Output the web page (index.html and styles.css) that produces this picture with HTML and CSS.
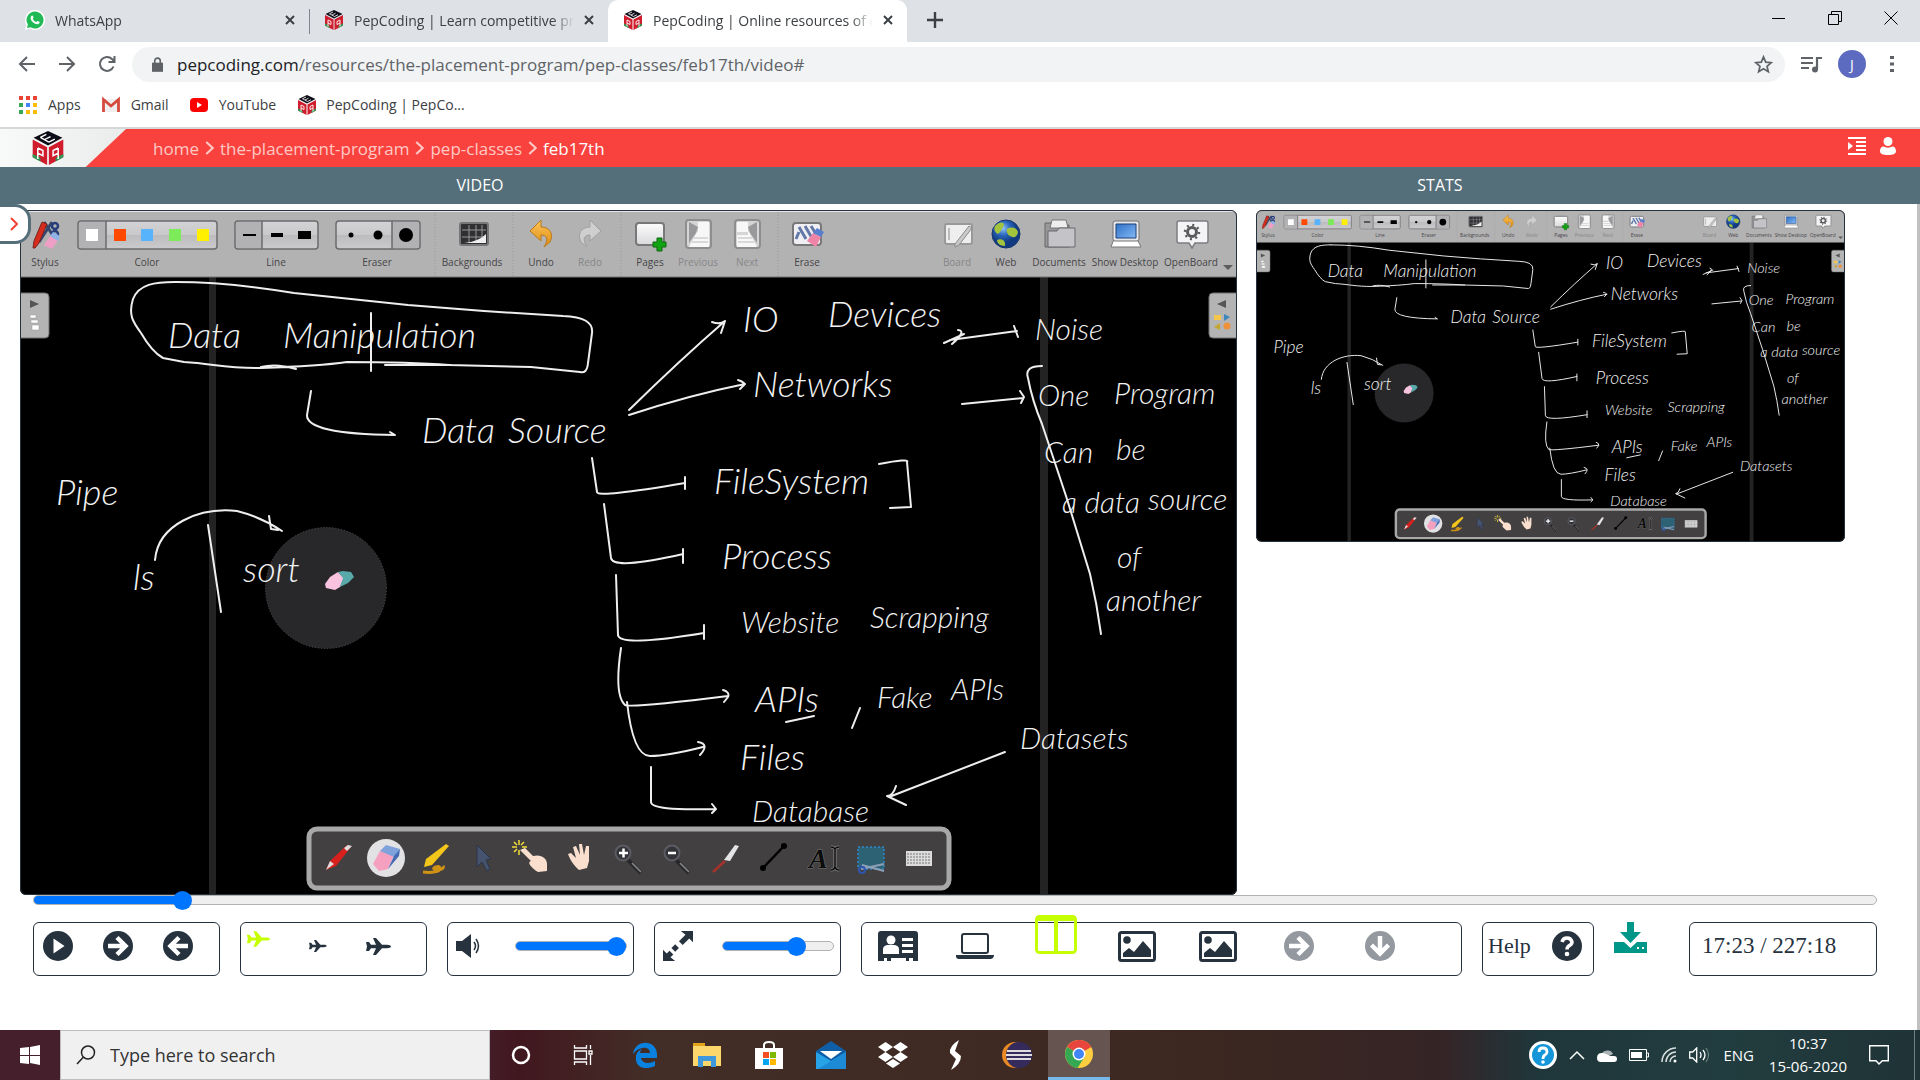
FILE: index.html
```html
<!DOCTYPE html>
<html lang="en">
<head>
<meta charset="utf-8">
<title>PepCoding | Online resources of the placement program</title>
<meta name="viewport" content="width=device-width, initial-scale=1">
<link rel="stylesheet" href="styles.css">
</head>
<body>
<svg class="defs" width="0" height="0" aria-hidden="true">
  <defs>
    <linearGradient id="g-btn" x2="0" y2="1"><stop offset="0" stop-color="#d3d2d4"/><stop offset=".5" stop-color="#c9c8ca"/><stop offset=".5" stop-color="#bcbbbd"/><stop offset="1" stop-color="#cbcacc"/></linearGradient>
    <linearGradient id="g-screen" x2="1" y2="1"><stop offset="0" stop-color="#2f72c8"/><stop offset="1" stop-color="#84b8f4"/></linearGradient>
    <linearGradient id="g-undo" x2="0" y2="1"><stop offset="0" stop-color="#fbc457"/><stop offset="1" stop-color="#e08c12"/></linearGradient>
    <linearGradient id="g-card" x2="0" y2="1"><stop offset="0" stop-color="#fdfdfd"/><stop offset="1" stop-color="#d9d9dc"/></linearGradient>
    <radialGradient id="g-globe" cx=".4" cy=".3"><stop offset="0" stop-color="#8ec6f5"/><stop offset=".5" stop-color="#2a66bd"/><stop offset="1" stop-color="#123a80"/></radialGradient>
  </defs>
  <symbol id="pep" viewBox="0 0 40 40">
    <path d="M20 0 37 8 20 17 3 8Z" fill="#0d0d17"/>
    <path d="M2 10 19 19V40L2 31Z" fill="#d01d2d"/><path d="M38 10 21 19V40l17-9Z" fill="#d01d2d"/>
    <path d="M2 27l9 4.500V36l-9-5ZM38 27l-9 4.500V36l9-5Z" fill="#2b9a56"/>
    <path d="M11 7.500 21 13M11 7.500l7-3.500M16 10l7-3.500M21 13l7-3.500" stroke="#fff" stroke-width="1.600" fill="none"/>
    <path d="M8 20v13M8 20l6 3v6l-6-3M32 20v13M32 20l-6 3v6l6-3" stroke="#fff" stroke-width="1.800" fill="none"/>
  </symbol>
  <symbol id="plane" viewBox="0 0 26 17"><path d="M26 8.500c0 1-2 1.700-4 1.700h-5L11 17H8l3-6.800H6L4 13H1l1-4.500L1 4h3l2 2.800h5L8 0h3l6 6.800h5c2 0 4 .7 4 1.700Z" fill="currentColor"/></symbol>
  <symbol id="go" viewBox="0 0 30 30"><circle cx="15" cy="15" r="15" fill="currentColor"/><path d="M5 15h17M14 6.500l8.500 8.500-8.500 8.500" fill="none" stroke="#fff" stroke-width="4.500"/></symbol>
  <symbol id="picture" viewBox="0 0 38 31"><rect x="1.500" y="1.500" width="35" height="28" rx="2" fill="none" stroke="currentColor" stroke-width="3"/><circle cx="9" cy="9" r="3.800" fill="currentColor"/><path d="M5 26v-4l6-5 5 4 9-11 8 9v7Z" fill="currentColor"/></symbol>
</svg>

<header class="browser">
  <div class="tabstrip">
    <div class="tab">
      <svg class="fav" viewBox="0 0 20 20"><path d="M10 0a10 10 0 1 1-5 18.600L0 20l1.400-5A10 10 0 0 1 10 0Z" fill="#fff"/><path d="M10 1.500a8.500 8.500 0 1 1-4.500 15.700L2 18l.9-3.400A8.500 8.500 0 0 1 10 1.500Z" fill="#20b955"/><path d="M6 6.500c1-2 2-1 2.500.8.2.7-.8 1.200-.6 1.600.7 1.500 1.800 2.500 3.300 3 .6 0 1-1.200 1.500-1 2 .9 2.500 1.100 1.600 2.400-1.600 2-5.300.2-6.600-1.200C6 10.500 5 8.500 6 6.500Z" fill="#fff"/></svg>
      <span class="tab-title">WhatsApp</span>
      <button class="tab-close" aria-label="Close tab"><svg viewBox="0 0 10 10"><path d="M1 1l8 8M9 1l-8 8"/></svg></button>
    </div>
    <div class="tab tab-divided">
      <svg class="fav"><use href="#pep"/></svg>
      <span class="tab-title">PepCoding | Learn competitive pr</span>
      <button class="tab-close" aria-label="Close tab"><svg viewBox="0 0 10 10"><path d="M1 1l8 8M9 1l-8 8"/></svg></button>
    </div>
    <div class="tab tab-active">
      <svg class="fav"><use href="#pep"/></svg>
      <span class="tab-title">PepCoding | Online resources of c</span>
      <button class="tab-close" aria-label="Close tab"><svg viewBox="0 0 10 10"><path d="M1 1l8 8M9 1l-8 8"/></svg></button>
    </div>
    <button class="new-tab" aria-label="New tab"><svg viewBox="0 0 16 16" width="16" height="16"><path d="M8 0v16M0 8h16" stroke="#3c4043" stroke-width="2.400"/></svg></button>
    <div class="window-buttons">
      <button aria-label="Minimise"><svg viewBox="0 0 14 14"><path d="M0 7.500h13"/></svg></button>
      <button aria-label="Restore"><svg viewBox="0 0 14 14"><path d="M.5 3.500h10v10h-10zM3.500 3V.5h10v10H11"/></svg></button>
      <button aria-label="Close"><svg viewBox="0 0 14 14"><path d="M.5.5l13 13M13.500.5l-13 13"/></svg></button>
    </div>
  </div>
  <div class="toolbar">
    <div class="nav-buttons">
      <button aria-label="Back"><svg viewBox="0 0 18 18"><path d="M17 9H2M9 2L2 9l7 7"/></svg></button>
      <button aria-label="Forward"><svg viewBox="0 0 18 18"><path d="M1 9h15M9 2l7 7-7 7"/></svg></button>
      <button aria-label="Reload"><svg viewBox="0 0 18 18"><path d="M15.500 11.500a7 7 0 1 1-1.500-7.500l2 2M16.500 1v6h-6"/></svg></button>
    </div>
    <div class="omnibox">
      <svg class="lock" viewBox="0 0 12 16"><path d="M0 6h12v10H0z" fill="#5f6368"/><path d="M3 7V4a3 3 0 0 1 6 0v3" fill="none" stroke="#5f6368" stroke-width="1.800"/></svg>
      <span class="url"><b>pepcoding.com</b>/resources/the-placement-program/pep-classes/feb17th/video#</span>
      <button class="star" aria-label="Bookmark"><svg viewBox="0 0 20 20" width="19" height="19"><path d="M10 2l2.300 5.500 5.900.5-4.500 3.900 1.400 5.800L10 14.600l-5.100 3.100 1.400-5.800L1.800 8l5.900-.5Z" fill="none" stroke="#5f6368" stroke-width="1.800"/></svg></button>
    </div>
    <button class="bare" aria-label="Media"><svg viewBox="0 0 21 17" width="21" height="17"><path d="M0 2h12M0 7h12M0 12h8M16 13V2h5" fill="none" stroke="#5f6368" stroke-width="2.200"/><circle cx="14" cy="13.500" r="3" fill="#5f6368"/></svg></button>
    <button class="avatar" aria-label="Profile">J</button>
    <button class="bare" aria-label="Menu"><svg viewBox="0 0 4 18" width="4" height="18"><path d="M0 1h4v3H0zM0 7.500h4v3H0zM0 14h4v3H0z" fill="#5f6368"/></svg></button>
  </div>
  <nav class="bookmarks" aria-label="Bookmarks">
    <a href="#"><svg viewBox="0 0 18 18"><path d="M0 0h4v4H0zM7 0h4v4H7zM14 0h4v4h-4z" fill="#ea4335"/><path d="M0 7h4v4H0z" fill="#34a853"/><path d="M7 7h4v4H7z" fill="#4285f4"/><path d="M14 7h4v4h-4zM7 14h4v4H7zM14 14h4v4h-4z" fill="#fbbc05"/><path d="M0 14h4v4H0z" fill="#34a853"/></svg>Apps</a>
    <a href="#"><svg viewBox="0 0 18 18"><path d="M1 3h16v13H1z" fill="#eee"/><path d="M1.500 16V3.500L9 10l7.500-6.500V16" fill="none" stroke="#d64a3d" stroke-width="2.800"/></svg>Gmail</a>
    <a href="#"><svg viewBox="0 0 18 18"><rect y="2" width="18" height="14" rx="4" fill="#f00"/><path d="M7 6l5 3-5 3z" fill="#fff"/></svg>YouTube</a>
    <a href="#"><svg class="wide"><use href="#pep"/></svg>PepCoding | PepCo...</a>
  </nav>
</header>

<div class="site-header">
  <a class="brand" href="#" aria-label="PepCoding home"><svg width="38" height="34"><use href="#pep"/></svg></a>
  <nav class="crumbs" aria-label="Breadcrumb">
    <a href="#">home</a><svg viewBox="0 0 8 13"><path d="M1 1l6 5.500L1 12"/></svg>
    <a href="#">the-placement-program</a><svg viewBox="0 0 8 13"><path d="M1 1l6 5.500L1 12"/></svg>
    <a href="#">pep-classes</a><svg viewBox="0 0 8 13"><path d="M1 1l6 5.500L1 12"/></svg>
    <a class="current" href="#">feb17th</a>
  </nav>
  <div class="site-actions">
    <button class="bare" aria-label="Contents"><svg viewBox="0 0 18 18" width="18" height="18"><path d="M0 1h18M8 5h10M8 9h10M8 13h10M0 17h18" stroke="#fff" stroke-width="2"/><path d="M0 5l5 4-5 4z" fill="#fff"/></svg></button>
    <button class="bare" aria-label="Account"><svg viewBox="0 0 16 18" width="16" height="18"><circle cx="8" cy="4.500" r="4.500" fill="#fff"/><path d="M0 14c0-4 3-5 4-4.500 2 1.500 6 1.500 8 0 1-.5 4 .5 4 4.500 0 3-3 4-8 4s-8-1-8-4Z" fill="#fff"/></svg></button>
  </div>
</div>

<nav class="page-tabs" aria-label="Sections"><a href="#">VIDEO</a><a href="#">STATS</a></nav>

<div class="page">
  <button class="drawer" aria-label="Open drawer"><svg viewBox="0 0 8 14" width="8" height="14"><path d="M1 1l6 6-6 6" fill="none" stroke="#f44336" stroke-width="2"/></svg></button>
  <main>
    <div class="stage">
      <svg class="frame" id="lecture" viewBox="20 210 1217 685" role="img" aria-label="Lecture whiteboard">
        <rect x="20" y="210" width="1217" height="685" fill="#000"/>
        <path d="M209 277h7v618h-7zM1040 277h8v618h-8z" fill="#232324"/>
        <g class="bar">
          <rect x="20" y="212" width="1217" height="65" fill="#b3b2b3"/>
          <path d="M20 211h1217" stroke="#e6e4e8" stroke-width="2"/>
          <path d="M20 277h1217" stroke="#737373"/>
          <path d="M435 212v64M513 212v64M621 212v64M778 212v64" stroke="#969696" stroke-dasharray="1 2"/>
          <path d="M52 222l-13 20" stroke="#35466f" stroke-width="3"/><path d="M44 222l8 12" stroke="#35466f" stroke-width="3"/><circle cx="55" cy="226" r="3" fill="none" stroke="#283e7c" stroke-width="2.500"/><circle cx="55" cy="234" r="3" fill="none" stroke="#283e7c" stroke-width="2.500"/><path d="M33 248l1-7 8-19 5 2-8 19-4 5z" fill="#d62c1e" stroke="#7b231d"/><path d="M44 245l6-9 8 4-6 9z" fill="#ef9fc5"/><path d="M50 236l3-4 7 4-2 5z" fill="#90b3e6"/>
          <g stroke="#6c6a6d" stroke-width="1.500"><rect x="78" y="221" width="139" height="28" rx="3" fill="url(#g-btn)"/><rect x="235" y="221" width="83" height="28" rx="3" fill="url(#g-btn)"/><rect x="336" y="221" width="84" height="28" rx="3" fill="url(#g-btn)"/><path d="M79 222h27v26H79zM236 222h26v26h-26zM392 222h27v26h-27z" fill="#b2b1b3" stroke="none"/><path d="M106 221v28M262 221v28M392 221v28"/></g>
          <path d="M86 229h12v12H86z" fill="#fff"/><path d="M114 229h12v12h-12z" fill="#ff4800"/><path d="M141 229h12v12h-12z" fill="#57b3fb"/><path d="M169 229h12v12h-12z" fill="#7cea59"/><path d="M197 229h12v12h-12z" fill="#fff000"/>
          <path d="M243 234h13v2h-13zM271 233h12v4h-12zM298 231h13v8h-13z"/><circle cx="351" cy="235" r="2.500"/><circle cx="378" cy="235" r="4.500"/><circle cx="406" cy="235" r="7"/>
          <rect x="460" y="223" width="28" height="22" rx="2" fill="#303033" stroke="#77777a" stroke-width="2"/><path d="M462 230h24M462 237h24M469 225v18M476 225v18M482 225v18" stroke="#96969a"/><path d="M464 243c10-1 17-4 22-9v9z" fill="#eee"/>
          <path d="M541 220v7c9 0 13 7 9 15l-6 5c5-8 3-12-3-12v6l-11-10z" fill="url(#g-undo)" stroke="#b9791c"/><path d="M590 220v7c-9 0-13 7-9 15l6 5c-5-8-3-12 3-12v6l11-10z" fill="#cfcfcf" stroke="#a0a0a0"/>
          <rect x="636" y="223" width="28" height="22" rx="3" fill="url(#g-card)" stroke="#78787a" stroke-width="2"/><path d="M657 238h5v4h4v5h-4v4h-5v-4h-4v-5h4z" fill="#12a312" stroke="#0a6a0c"/>
          <rect x="686" y="220" width="25" height="28" rx="3" fill="#d5d5d5" stroke="#8e8e90" stroke-width="2"/><path d="M698 222h11v13h-11zM689 247l8-15h12v15z" fill="#f7f7f7"/><path d="M689 222l9 5-2 6-7 10z" fill="#99999b"/><path d="M694 238h14M692 242h16" stroke="#bbb"/>
          <rect x="735" y="220" width="25" height="28" rx="3" fill="#d5d5d5" stroke="#8e8e90" stroke-width="2"/><path d="M737 222h11v13h-11zM757 247l-8-15h-12v15z" fill="#f7f7f7"/><path d="M757 222l-9 5 2 6 7 10z" fill="#99999b"/><path d="M738 238h14M738 242h16" stroke="#bbb"/>
          <rect x="793" y="223" width="28" height="22" rx="3" fill="#f0f0f4" stroke="#78787a" stroke-width="2"/><path d="M796 239l3-7M799 227l7 12M805 226l7 12M811 226l5 8" stroke="#6278a6" stroke-width="3" fill="none"/><path d="M807 241l6-8 8 4-5 10z" fill="#ee84a6"/><path d="M813 233l4-5 7 4-3 5z" fill="#5a7fcf"/>
          <rect x="945" y="224" width="27" height="20" rx="2" fill="#eee" stroke="#999" stroke-width="2"/><path d="M949 228v12M955 244l14-18 3 2-13 17-4 2z" fill="#c9c9c9" stroke="#8b8b8b"/>
          <circle cx="1006" cy="234" r="14" fill="url(#g-globe)" stroke="#17376e"/><path d="M995 226c5-5 9-4 9-1-2 3-3 7-6 9-2-1-5-4-3-8ZM1007 229c5-3 10-1 11 3-1 6-5 6-8 4-2-1-4-4-3-7ZM997 240c5-2 9 1 8 6-5 0-8-3-8-6Z" fill="#a4c33c"/>
          <path d="M1045 223h9l2 2h13v22h-24z" fill="#98989b" stroke="#666"/><path d="M1052 220h14l2 8h-18z" fill="#eee" stroke="#777"/><path d="M1048 231h9l2-3h16v19h-27z" fill="#c3c3c8" stroke="#68686c"/>
          <path d="M1111 247l3-8h23l4 8z" fill="#fff" stroke="#777"/><rect x="1113" y="221" width="26" height="20" rx="2" fill="#e7e7e9" stroke="#707074"/><path d="M1116 224h20v14h-20z" fill="url(#g-screen)" stroke="#1d3e78"/>
          <path d="M1179 221h27q2 0 2 2v18q0 2-2 2h-11l-3 5-3-5h-10q-2 0-2-2v-18q0-2 2-2z" fill="#f4f4f6" stroke="#7d7d80" stroke-width="1.500"/><circle cx="1192" cy="232" r="4.500" fill="none" stroke="#5b5b5e" stroke-width="3"/><circle cx="1192" cy="232" r="7" fill="none" stroke="#5b5b5e" stroke-width="2.500" stroke-dasharray="2 3.500"/>
          <path d="M1223 265h10l-5 5z" fill="#5d5d5f"/>
          <g class="bar-labels"><text x="45" y="266">Stylus</text><text x="147" y="266">Color</text><text x="276" y="266">Line</text><text x="377" y="266">Eraser</text><text x="472" y="266">Backgrounds</text><text x="541" y="266">Undo</text><text class="off" x="590" y="266">Redo</text><text x="650" y="266">Pages</text><text class="off" x="698" y="266">Previous</text><text class="off" x="747" y="266">Next</text><text x="807" y="266">Erase</text><text class="off" x="957" y="266">Board</text><text x="1006" y="266">Web</text><text x="1059" y="266">Documents</text><text x="1125" y="266">Show Desktop</text><text x="1191" y="266">OpenBoard</text></g>
        </g>
        <path d="M20 293h25q4 0 4 4v37q0 4-4 4H20z" fill="#b5b4b5" stroke="#707070"/><path d="M30 300l9 4-9 4z" fill="#555"/><path d="M30 315h6v3h-6zM31 320h7v3h-7zM32 325h7v5h-7z" fill="#fff" stroke="#999" stroke-width=".5"/>
        <path d="M1237 293h-24q-4 0-4 4v37q0 4 4 4h24z" fill="#b5b4b5" stroke="#707070"/><path d="M1226 300l-9 4 9 4z" fill="#555"/><path d="M1214 315h7v5h-7z" fill="#f4c74a"/><path d="M1224 314l6 3-6 4z" fill="#3d87bb"/><path d="M1220 323v7l-6-3z" fill="#c3a730"/><circle cx="1227" cy="326" r="3.500" fill="#ef9138"/>
        <circle cx="326" cy="588" r="60.500" fill="#28282a" stroke="#555" stroke-dasharray="1 2"/>
        <path d="M325 584l5-7 8-5 6 6-4 9-5 3-9-2z" fill="#f9c3df"/><path d="M338 572l5-1 8 1 3 5-6 6-8 4 3-9z" fill="#58a9aa"/>
        <g class="ink">
          <path d="M175 282C155 282 139 284 133 299C128 315 133 322 141 333Q152 352 163 358L184 362C215 364 225 368 261 368Q320 366 347 362Q410 362 449 365L531 367L580 372Q587 374 588 363L592 333Q594 317 563 316L484 311L408 305L294 293Q229 282 175 282M261 367q15-4 35 2M371 313v58M385 365h66"/>
          <path d="M311 391L307 415Q306 434 395 435l-5-3"/>
          <path d="M155 560C158 524 200 507 237 511Q261 517 282 531M269 516l2 13 7 1M208 525l13 87"/>
          <path d="M629 410Q680 360 725 321M712 322q8 3 13-1l-4 12M629 415Q690 395 745 384M738 380q4 1 7 4l-5 5"/>
          <path d="M944 343l20-9M958 330q9 1-6 14M950 340l67-9M1014 326l4 11M962 404l61-6M1020 391l4 6-3 6"/>
          <path d="M1042 366Q1024 366 1028 378Q1032 400 1042 424L1067 499L1090 574Q1097 604 1101 634"/>
          <path d="M592 458l5 34q0 6 88-9M685 477v12M604 504l7 54q2 12 72-4M683 549v14M616 575l2 60q2 12 86-2M704 625v14M621 648Q614 695 625 705q7 3 103-9M723 690q7 2 5 7l-4 5M627 702Q633 756 650 756t53-9M698 742q12 2 2 13M651 767v35q0 9 64 7M712 804l4 5-4 4"/>
          <path d="M879 464q31-6 28-2l4 45-21 1M786 722l28-6M1005 752L889 797M896 786q-3 10-9 10l19 9M860 708l-8 20"/>
        </g>
        <g class="words">
          <text class="xl" x="168" y="348">Data</text><text class="xl" x="283" y="348">Manipulation</text>
          <text class="xl" x="422" y="443">Data</text><text class="xl" x="508" y="443">Source</text>
          <text class="xl" x="56" y="505">Pipe</text><text class="xl" x="133" y="590">ls</text><text class="xl" x="243" y="582">sort</text>
          <text class="xl" x="743" y="332">IO</text><text class="xl" x="828" y="327">Devices</text><text x="1035" y="340">Noise</text>
          <text class="xl" x="753" y="397">Networks</text><text x="1038" y="406">One</text><text x="1114" y="404">Program</text>
          <text x="1044" y="463">Can</text><text x="1116" y="460">be</text><text x="1062" y="513">a data</text><text x="1148" y="510">source</text><text x="1117" y="568">of</text><text x="1106" y="611">another</text>
          <text class="xl" x="714" y="494">FileSystem</text><text class="xl" x="722" y="569">Process</text><text x="741" y="633">Website</text><text x="870" y="628">Scrapping</text>
          <text class="xl" x="755" y="712">APIs</text><text x="877" y="708">Fake</text><text x="951" y="700">APIs</text><text class="xl" x="740" y="770">Files</text><text x="752" y="822">Database</text><text x="1020" y="749">Datasets</text>
        </g>
        <g class="palette">
          <rect x="309" y="829" width="640" height="59" rx="8" fill="#424041" stroke="#a9a8a9" stroke-width="5"/>
          <path d="M326 870l4-9 17-16 4 2-15 19z" fill="#d8201c"/><path d="M326 870l4-9 4 3zM344 848l4-3 4 1-5 5z" fill="#ddd"/>
          <circle cx="386" cy="858" r="19" fill="#e2e1e4"/><path d="M373 864l7-13 14 4-6 14-9 2z" fill="#f6a0c0"/><path d="M380 851l6-6 14 4-6 8z" fill="#7fa2dc"/><path d="M388 869l6-13 6-7-1 7z" fill="#466bb5"/>
          <path d="M424 867l2-8 20-15 3 2-17 19z" fill="#f4c61a"/><path d="M423 872c8 1 18 0 17-4-1-3-8 0-6 1 6 2 11-1 9-3" fill="none" stroke="#cf9215" stroke-width="3"/>
          <path d="M477 845v22l5-5 5 9 3-2-4-9 5-1z" fill="#46536f" stroke="#2c3548"/>
          <path d="M520 850l5-2 8 8c8-2 14 2 14 8v7l-9 1c-8-5-11-10-7-11z" fill="#fadfce"/><path d="M519 840v5M519 850v5M512 847h5M522 847h5M514 842l3 3M524 842l-3 3M514 852l3-3" stroke="#f1dc3c" stroke-width="1.500"/>
          <path d="M568 854l3-1 5 5-3-11 3-1 4 9-1-11h3l2 11 2-9h3v15l-2 7-8 2c-6-5-9-11-11-16z" fill="#fadfce"/>
          <path d="M628 860l13 13M676 860l13 13" stroke="#28282c" stroke-width="4"/><path d="M632 863l9 9M680 863l9 9" stroke="#888" stroke-width="1.500"/><circle cx="623" cy="853" r="7.500" fill="#33333a" stroke="#5c5b63" stroke-width="2"/><circle cx="672" cy="853" r="7.500" fill="#33333a" stroke="#5c5b63" stroke-width="2"/><path d="M619 853h9M623.500 848.500v9M668 853h8" stroke="#fff" stroke-width="2.500"/>
          <path d="M724 860l11-15 4 1-9 15z" fill="#e5e5e8"/><path d="M713 872l12-11" stroke="#a8322b" stroke-width="2.500"/>
          <path d="M763 868l21-22" stroke="#000" stroke-width="2.500"/><circle cx="763" cy="868" r="3"/><circle cx="784" cy="846" r="3"/>
          <text class="text-tool" x="809" y="868">A</text><path d="M831 847q3 0 4 2q1-2 4-2M835 849v18M831 870q3 0 4-3q1 3 4 3" fill="none" stroke="#8a8a8a" stroke-width="3"/><path d="M831 847q3 0 4 2q1-2 4-2M835 849v18M831 870q3 0 4-3q1 3 4 3" fill="none" stroke="#0c0c0c" stroke-width="1.500"/>
          <path d="M858 847h26v22h-26z" fill="#2c6273" stroke="#2f86cb" stroke-width="1.500" stroke-dasharray="2 2"/><path d="M861 869l23-5M862 865l22 6" stroke="#8ea0b8" stroke-width="2"/><circle cx="862" cy="870" r="3" fill="none" stroke="#2f56ae" stroke-width="2"/>
          <rect x="906" y="851" width="26" height="15" fill="#dcdcdc"/><path d="M907 854h24M907 857h24M907 860h24M907 863h24" stroke="#777" stroke-dasharray="2 1"/>
        </g>
      </svg>
      <svg class="frame" id="preview" viewBox="20 210 1217 685" role="img" aria-label="Screen share"></svg>
    </div>

    <div class="player">
      <input class="slider seek" type="range" min="0" max="1000" value="76" style="--fill:8%" aria-label="Seek">
      <div class="controls">
        <div class="box transport">
          <button aria-label="Play"><svg viewBox="0 0 30 30" width="30" height="30"><circle cx="15" cy="15" r="15" fill="currentColor"/><path d="M10.500 7.500l11 7.500-11 7.500z" fill="#fff"/></svg></button>
          <button aria-label="Forward"><svg width="30" height="30"><use href="#go"/></svg></button>
          <button aria-label="Back"><svg class="turn-left" width="30" height="30"><use href="#go"/></svg></button>
        </div>
        <div class="box speeds">
          <button class="selected" aria-label="Normal speed"><svg width="24" height="16"><use href="#plane"/></svg></button>
          <button aria-label="Fast"><svg width="19" height="12"><use href="#plane"/></svg></button>
          <button aria-label="Faster"><svg width="26" height="17"><use href="#plane"/></svg></button>
        </div>
        <div class="box level">
          <button aria-label="Mute"><svg viewBox="0 0 24 24" width="24" height="24"><path d="M0 7h6l9-7v24l-9-7H0z" fill="currentColor"/><path d="M18 8q3 4 0 8M20 5q5 7 0 14" fill="none" stroke="currentColor" stroke-width="1.500"/></svg></button>
          <input class="slider" type="range" min="0" max="100" value="100" style="--fill:100%" aria-label="Volume">
        </div>
        <div class="box level">
          <button aria-label="Resize"><svg viewBox="0 0 32 32" width="30" height="30"><path d="M19 0h13v12l-4-4-7 7-4-4 7-7zM13 32H0V20l4 4 3-3 4 4-3 3zM9 18l4-4 4 4-4 4z" fill="currentColor"/></svg></button>
          <input class="slider" type="range" min="0" max="100" value="70" style="--fill:70%" aria-label="Zoom">
        </div>
        <div class="box views">
          <button aria-label="Notes"><svg viewBox="0 0 40 31" width="40" height="31"><path d="M3 0h34q3 0 3 3v27h-5v-3h-4v3h-3v-3H13v3h-4v-3H6v3H0V3q0-3 3-3Z" fill="currentColor"/><circle cx="13" cy="9" r="4.500" fill="#fff"/><path d="M5 23v-5q0-3 4-4h8q4 1 4 4v5zM24 7h11v3H24zM24 13h11v3H24zM24 19h11v3H24z" fill="#fff"/></svg></button>
          <button aria-label="Laptop"><svg viewBox="0 0 38 26" width="38" height="26"><rect x="6" y="1" width="26" height="19" rx="2" fill="none" stroke="currentColor" stroke-width="2"/><path d="M0 22h38v1q-1 3-3 3H3q-3 0-3-3z" fill="currentColor"/></svg></button>
          <button class="selected" aria-label="Side by side"><svg viewBox="0 0 42 39" width="42" height="39"><rect x="1.500" y="1.500" width="39" height="36" rx="3" fill="none" stroke="currentColor" stroke-width="3"/><path d="M1 1h40v5H1zM19 5h4v32h-4z" fill="currentColor"/></svg></button>
          <button aria-label="First picture"><svg width="38" height="31"><use href="#picture"/></svg></button>
          <button aria-label="Second picture"><svg width="38" height="31"><use href="#picture"/></svg></button>
          <button aria-label="Move right" disabled><svg width="30" height="30"><use href="#go"/></svg></button>
          <button aria-label="Move down" disabled><svg class="turn-down" width="30" height="30"><use href="#go"/></svg></button>
        </div>
        <button class="box help">Help <svg viewBox="0 0 30 30" width="30" height="30"><circle cx="15" cy="15" r="15" fill="currentColor"/><path d="M10 11q1-4 5-4t5 4q0 2-2.500 3.500T15 18.500" fill="none" stroke="#fff" stroke-width="3.500"/><circle cx="15" cy="23" r="2.300" fill="#fff"/></svg></button>
        <button class="download" aria-label="Download"><svg viewBox="0 0 33 31" width="33" height="31"><path d="M13 0h7v10h7L16.500 21 6 10h7zM0 20h10l6.500 6 6.500-6h10v11H0z" fill="#009688"/><path d="M23 25h2v2h-2zM28 25h2v2h-2z" fill="#fff"/></svg></button>
        <div class="box time">17:23 / 227:18</div>
      </div>
    </div>
  </main>
  <div class="scroll-track"></div>
</div>

<footer class="taskbar">
  <button class="start" aria-label="Start"><svg viewBox="0 0 20 20" width="20" height="20"><path d="M0 3l9-1v8H0zM10 2l10-2v10H10zM0 11h9v8l-9-1zM10 11h10v9l-10-2z" fill="#fff"/></svg></button>
  <label class="search"><svg viewBox="0 0 20 20" width="20" height="20"><circle cx="12" cy="7.500" r="6.500"/><path d="M7.500 12L1 19"/></svg><input type="text" placeholder="Type here to search" aria-label="Type here to search"></label>
  <div class="apps">
    <button aria-label="Cortana"><svg viewBox="0 0 20 20" width="20" height="20"><circle cx="10" cy="10" r="8" fill="none" stroke="#fff" stroke-width="2.500"/></svg></button>
    <button aria-label="Task view"><svg viewBox="0 0 20 20" width="20" height="20"><path d="M1.500 0v3h12V0M1.500 6h12v8h-12zM1.500 20v-3h12v3M17.500 0v4M17.500 10v10M16 6h3v3h-3z" fill="none" stroke="#fff" stroke-width="1.300"/></svg></button>
    <button aria-label="Edge"><svg viewBox="0 0 26 26" width="26" height="26"><path d="M1 12C3-3 24-3 25 12v4H9c1 6 9 6 14 3v5C12 29 3 25 4 15c0-4 3-7 6-8-1 1-2 2-2 4h10C18 4 7 4 1 12Z" fill="#0a80df"/></svg></button>
    <button aria-label="Explorer"><svg viewBox="0 0 28 24" width="28" height="24"><path d="M0 0h12v4H0z" fill="#e2a41b"/><path d="M0 3h28v20H0z" fill="#fcd76b"/><path d="M5 24V13h18v11h-5v-6h-8v6z" fill="#3f98dc"/></svg></button>
    <button aria-label="Store"><svg viewBox="0 0 28 28" width="28" height="28"><path d="M9 8V4q0-3 5-3t5 3v4" fill="none" stroke="#fff" stroke-width="2"/><path d="M0 7h28v21H0z" fill="#fff"/><path d="M8 11h6v6H8z" fill="#f25022"/><path d="M15 11h6v6h-6z" fill="#7fba00"/><path d="M8 18h6v6H8z" fill="#00a4ef"/><path d="M15 18h6v6h-6z" fill="#ffb900"/></svg></button>
    <button aria-label="Mail"><svg viewBox="0 0 30 28" width="30" height="28"><path d="M0 10L15 0l15 10v18H0z" fill="#0f5ea8"/><path d="M4 10h22L15 18z" fill="#fff"/><path d="M0 11l15 9 15-9v17H0z" fill="#27a3e8"/><path d="M2 28L30 11v17z" fill="#1d8ad6"/></svg></button>
    <button aria-label="Dropbox"><svg viewBox="0 0 30 26" width="30" height="26"><path d="M7.500 0L15 5l-7.500 5L0 5zM22.500 0L30 5l-7.500 5L15 5zM7.500 10l7.500 5-7.500 5L0 15zM22.500 10l7.500 5-7.500 5-7.500-5zM15 17l7 4.500-7 4.500-7-4.500z" fill="#fff"/></svg></button>
    <button aria-label="Stylus app"><svg viewBox="0 0 16 30" width="16" height="30"><path d="M12 0Q2 6 3 13l6 6-5 11Q14 24 14 16L8 11z" fill="#fff"/></svg></button>
    <button aria-label="Eclipse"><svg viewBox="0 0 30 28" width="30" height="28"><circle cx="13" cy="14" r="13" fill="#e98a22"/><circle cx="17" cy="14" r="13" fill="#342a5c"/><path d="M5 10h24M4 14h26M5 18h24" stroke="#ddd" stroke-width="2"/></svg></button>
    <button class="running" aria-label="Chrome"><svg viewBox="0 0 28 28" width="28" height="28"><circle cx="14" cy="14" r="14" fill="#ffcd40"/><path d="M14 14L2 7a14 14 0 0 1 24.300 0z" fill="#e8453c"/><path d="M14 14L2 7a14 14 0 0 0 10.500 21l7-11z" fill="#34a853"/><circle cx="14" cy="14" r="6.500" fill="#fff"/><circle cx="14" cy="14" r="5" fill="#4285f4"/></svg></button>
  </div>
  <div class="tray">
    <button aria-label="Assistant"><svg viewBox="0 0 28 28" width="28" height="28"><circle cx="14" cy="14" r="12.500" fill="#1596d8" stroke="#fff" stroke-width="3"/><path d="M10 11q0-4 4-4t4 4q0 2-2 3t-2 4" fill="none" stroke="#fff" stroke-width="2.800"/><circle cx="14" cy="21" r="1.800" fill="#fff"/></svg></button>
    <button aria-label="Hidden icons"><svg viewBox="0 0 16 10" width="16" height="10"><path d="M1 9l7-7 7 7" fill="none" stroke="#fff" stroke-width="1.500"/></svg></button>
    <button aria-label="OneDrive"><svg viewBox="0 0 20 14" width="20" height="14"><path d="M5 5a6 5 0 0 1 11 1l-6 3z" fill="#aab4b5"/><path d="M0 10q0-5 5-5 3 0 8 3h4q3 0 3 3t-3 3H4q-4 0-4-4Z" fill="#fff"/></svg></button>
    <button aria-label="Battery"><svg viewBox="0 0 20 12" width="20" height="12"><path d="M.5.5h17v11H.5zM18 4h1.500v4H18" fill="none" stroke="#fff"/><path d="M2 3h11v6H2z" fill="#fff"/></svg></button>
    <button aria-label="Network"><svg viewBox="0 0 16 16" width="16" height="16"><path d="M1 15A14 14 0 0 1 15 1M5 15A10 10 0 0 1 15 5M9 15a6 6 0 0 1 6-6" fill="none" stroke="#d8dfdf" stroke-width="1.500"/><circle cx="14" cy="14" r="1.500" fill="#fff"/></svg></button>
    <button aria-label="Sound"><svg viewBox="0 0 20 16" width="20" height="16"><path d="M.7 5h3l4-4v14l-4-4h-3zM11 5q2 3 0 6M14 3q4 5 0 10" fill="none" stroke="#fff" stroke-width="1.300"/><path d="M17 1q5 7 0 14" fill="none" stroke="#7d8f90"/></svg></button>
    <button class="lang">ENG</button>
    <button class="clock"><span>10:37</span><span>15-06-2020</span></button>
    <button aria-label="Notifications"><svg viewBox="0 0 20 20" width="20" height="20"><path d="M.7.700h18.600v15h-6L10 19l-3-3.300H.7z" fill="none" stroke="#fff" stroke-width="1.400"/></svg></button>
  </div>
</footer>
<script src="script.js"></script>
</body>
</html>
```
FILE: styles.css
```css
* { box-sizing: border-box; }
body {
  margin: 0;
  min-height: 100vh;
  display: flex;
  flex-direction: column;
  background: #fff;
  color: #26323e;
  font-family: "Open Sans", "Noto Sans", sans-serif;
}
button { padding: 0; border: 0; background: none; color: inherit; font: inherit; }
a { color: inherit; text-decoration: none; }
svg { display: block; flex: none; }
.defs { position: absolute; }

/* browser window */
.browser { font-size: 14px; color: #3c4043; border-bottom: 2px solid #d5d8da; }
.tabstrip { display: flex; height: 42px; padding-left: 10px; background: #dee1e6; }
.tab { display: flex; align-items: center; width: 299px; gap: 10px; padding: 0 14px 2px 15px; }
.tab-divided { background: linear-gradient(#80868b, #80868b) left center / 1px 25px no-repeat; }
.tab-active { background: #fff; border-radius: 10px 10px 0 0; }
.fav { width: 20px; height: 20px; }
.tab-title { flex: 1; overflow: hidden; white-space: nowrap; mask-image: linear-gradient(90deg, #000 90%, transparent); }
.tab-close svg { width: 10px; height: 10px; stroke: #3c4043; stroke-width: 2; }
.new-tab { margin-left: 20px; padding-bottom: 2px; }
.window-buttons { display: flex; gap: 42px; margin-left: auto; padding: 0 22px 6px 0; align-items: center; }
.window-buttons svg { width: 14px; height: 14px; fill: none; stroke: #000; }
.toolbar { display: flex; align-items: center; height: 44px; gap: 16px; padding: 0 26px 0 18px; }
.nav-buttons { display: flex; gap: 22px; }
.nav-buttons svg { width: 18px; height: 18px; fill: none; stroke: #5f6368; stroke-width: 2; }
.omnibox { flex: 1; display: flex; align-items: center; height: 35px; gap: 14px; padding: 0 12px 0 20px; border-radius: 18px; background: #f1f3f4; }
.lock { width: 11px; height: 15px; }
.url { flex: 1; font-size: 17px; color: #5f6368; white-space: nowrap; }
.url b { font-weight: 400; color: #202124; }
.avatar { width: 28px; height: 28px; border-radius: 50%; background: #5c6bc0; color: #fff; }
.toolbar .avatar + .bare { margin-left: 8px; }
.bookmarks { display: flex; align-items: center; height: 41px; padding: 0 0 4px 19px; gap: 21px; }
.bookmarks a { display: flex; align-items: center; gap: 11px; }
.bookmarks svg { width: 18px; height: 18px; }
.bookmarks .wide { width: 20px; height: 20px; margin-right: -2px; }

/* site header */
.site-header { display: flex; align-items: center; height: 38px; background: #f9423e; }
.brand { width: 126px; height: 38px; padding: 2px 0 0 29px; background: linear-gradient(90deg, #f8faf9, #e9eceb); clip-path: polygon(0 0, 100% 0, 68% 100%, 0 100%); }
.crumbs { display: flex; align-items: center; gap: 6px; margin-left: 27px; font-size: 17px; color: #ffc9c5; }
.crumbs svg { width: 9px; height: 14px; fill: none; stroke: #ffc9c5; stroke-width: 2; }
.crumbs .current { color: #fff; }
.site-actions { display: flex; gap: 14px; margin-left: auto; padding: 0 24px 5px 0; }
.page-tabs { display: grid; grid-template-columns: 1fr 1fr; align-items: center; height: 37px; padding-bottom: 1px; background: #546e7a; color: #fff; font-size: 16px; text-align: center; }

/* lecture frames */
.page { position: relative; display: flex; flex: 1; }
.drawer { position: absolute; left: 0; top: 0; width: 31px; height: 40px; padding-left: 10px; border: 3px solid #546e7a; border-left: 0; border-radius: 0 16px 16px 0; background: #fff; z-index: 1; }
main { flex: 1; min-width: 0; }
.scroll-track { width: 3px; background: #c1c1c1; }
.stage { display: grid; grid-template-columns: 1217fr 589fr 53fr; gap: 19px; align-items: start; padding: 6px 0 0 20px; }
.frame { width: 100%; border-radius: 6px; outline: 1px solid #26323e; outline-offset: -1px; }
.bar-labels text { font: 10px "Open Sans", sans-serif; fill: #454547; text-anchor: middle; }
.bar-labels .off { fill: #868688; }
.ink { fill: none; stroke: #eee; stroke-width: 2; stroke-linejoin: round; stroke-linecap: round; }
.words text { font: italic 300 30px Lato, sans-serif; fill: #f2f2f2; }
.words .xl { font-size: 36px; }
.palette .text-tool { font: italic bold 28px "Liberation Serif", serif; fill: #0c0c0c; stroke: #777; stroke-width: 1px; paint-order: stroke; }

/* player */
.player { padding: 0 40px 0 33px; }
.slider { appearance: none; flex: 1; display: block; min-width: 0; width: 100%; height: 10px; margin: 0; border: 1px solid #b2b2b2; border-radius: 5px; background: linear-gradient(#0075ff, #0075ff) left / var(--fill) 100% no-repeat #efefef; }
.slider::-webkit-slider-thumb { appearance: none; width: 19px; height: 19px; border-radius: 50%; background: #0075ff; }
.controls { display: grid; grid-template-columns: repeat(4, minmax(0, 187fr)) minmax(0, 601fr) minmax(0, 112fr) minmax(0, 55fr) minmax(0, 188fr); gap: 20px; margin-top: 17px; }
.box { display: flex; align-items: center; height: 54px; padding-bottom: 6px; border: 1px solid #26323e; border-radius: 6px; }
.transport { gap: 30px; padding-left: 9px; }
.speeds { gap: 38px; padding-left: 5px; }
.selected { color: #c6ff00; align-self: flex-start; }
.speeds .selected { margin-top: 8px; }
.level { gap: 35px; padding: 0 6px 6px 8px; }
.level + .level { gap: 29px; }
.views button { display: grid; justify-items: center; flex: 0 1 81px; }
.views button:first-child { flex-basis: 72px; }
.views .selected { margin-top: -8px; }
.views button:disabled { color: #9499a0; }
.turn-left { transform: rotate(180deg); }
.turn-down { transform: rotate(90deg); }
.help { justify-content: space-between; padding: 0 11px 6px 5px; font: 22px "Liberation Serif", serif; }
.download { align-self: start; }
.time { padding-left: 12px; font: 23px "Liberation Serif", serif; }

/* taskbar */
.taskbar { display: flex; height: 50px; background: linear-gradient(90deg, #451f2b 0, #451f2b 25%, #41171f 27%, #432e27 34%, #3c2820 62%, #352426 75%, #1f363b 80%, #223d3f 90%, #1f3337); color: #fff; }
.start { display: grid; place-items: center; width: 60px; }
.search { display: flex; align-items: center; gap: 12px; width: 430px; padding-left: 15px; border: 1px solid #bdbdbd; background: #f0f0f0; }
.search svg { fill: none; stroke: #222; stroke-width: 1.5; }
.search input { flex: 1; border: 0; background: none; font: 18px "Open Sans", sans-serif; }
.search input::placeholder { color: #333; }
.apps { display: flex; }
.apps button { display: grid; place-items: center; width: 62px; }
.apps .running { background: #665450; border-bottom: 3px solid #76b9ed; }
.tray { display: flex; align-items: center; gap: 12px; margin-left: auto; margin-right: 5px; padding-right: 25px; border-right: 1px solid #6f8384; font-size: 15px; }
.lang { padding-left: 2px; }
.clock { display: flex; flex-direction: column; align-items: center; width: 84px; line-height: 23px; margin-right: 7px; }
```
FILE: script.js
```js
const lecture = document.getElementById('lecture');
document.getElementById('preview').append(...lecture.cloneNode(true).childNodes);
```
